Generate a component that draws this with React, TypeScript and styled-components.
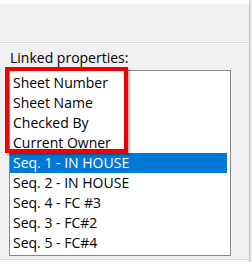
import React from "react";
import styled, { createGlobalStyle } from "styled-components";

const items = [
  "Sheet Number",
  "Sheet Name",
  "Checked By",
  "Current Owner",
  "Seq. 1 - IN HOUSE",
  "Seq. 2 - IN HOUSE",
  "Seq. 4 - FC #3",
  "Seq. 3 - FC#2",
  "Seq. 5 - FC#4",
];

const SELECTED = 4;

const GlobalStyle = createGlobalStyle`
  html, body {
    margin: 0;
    padding: 0;
    background: #f0f0f0;
  }
  body {
    font-family: "Open Sans", "Noto Sans", sans-serif;
  }
`;

const Page = styled.div`
  position: relative;
  display: flex;
  width: 252px;
  height: 262px;
  overflow: hidden;
`;

const Main = styled.div`
  width: 249px;
  display: flex;
  flex-direction: column;
`;

const TopStrip = styled.div`
  height: 4px;
  background: #ffffff;
`;

const RightEdge = styled.div`
  width: 3px;
  border-left: 1px solid #c4c4c4;
  background: #e6e6e6;
`;

const GroupBox = styled.div`
  margin-top: 38px;
  margin-left: -10px;
  width: 242px;
  border: 1px solid #dcdcdc;
  box-shadow: 1px 1px 0 #ffffff, inset 1px 1px 0 #ffffff;
  padding: 5px 0 3px 18px;
  display: flex;
  flex-direction: column;
`;

const Label = styled.div`
  height: 20px;
  margin-bottom: 2px;
  margin-left: 1px;
  font-size: 14px;
  line-height: 20px;
  color: #000;
`;

const ListBox = styled.ul`
  list-style: none;
  margin: 0;
  width: 220px;
  height: 182px;
  padding: 2px 0 0 0;
  box-sizing: content-box;
  background: #ffffff;
  border: 1px solid #828790;
  overflow: hidden;
`;

const Item = styled.li<{ $selected?: boolean }>`
  height: 20px;
  line-height: 20px;
  padding-left: 3px;
  margin-right: 3px;
  font-size: 14px;
  white-space: nowrap;
  color: ${(p) => (p.$selected ? "#ffffff" : "#000000")};
  background: ${(p) => (p.$selected ? "#0078d7" : "transparent")};
`;

const Highlight = styled.div`
  position: absolute;
  left: 5px;
  top: 67px;
  width: 115px;
  height: 78px;
  border: 4px solid #ee0000;
  box-shadow: 2px 2px 2px rgba(0, 0, 0, 0.3);
  pointer-events: none;
`;

export default function App() {
  return (
    <Page>
      <GlobalStyle />
      <Main>
        <TopStrip />
        <GroupBox>
          <Label>Linked properties:</Label>
          <ListBox>
            {items.map((text, i) => (
              <Item key={text} $selected={i === SELECTED}>
                {text}
              </Item>
            ))}
          </ListBox>
        </GroupBox>
      </Main>
      <RightEdge />
      <Highlight />
    </Page>
  );
}
